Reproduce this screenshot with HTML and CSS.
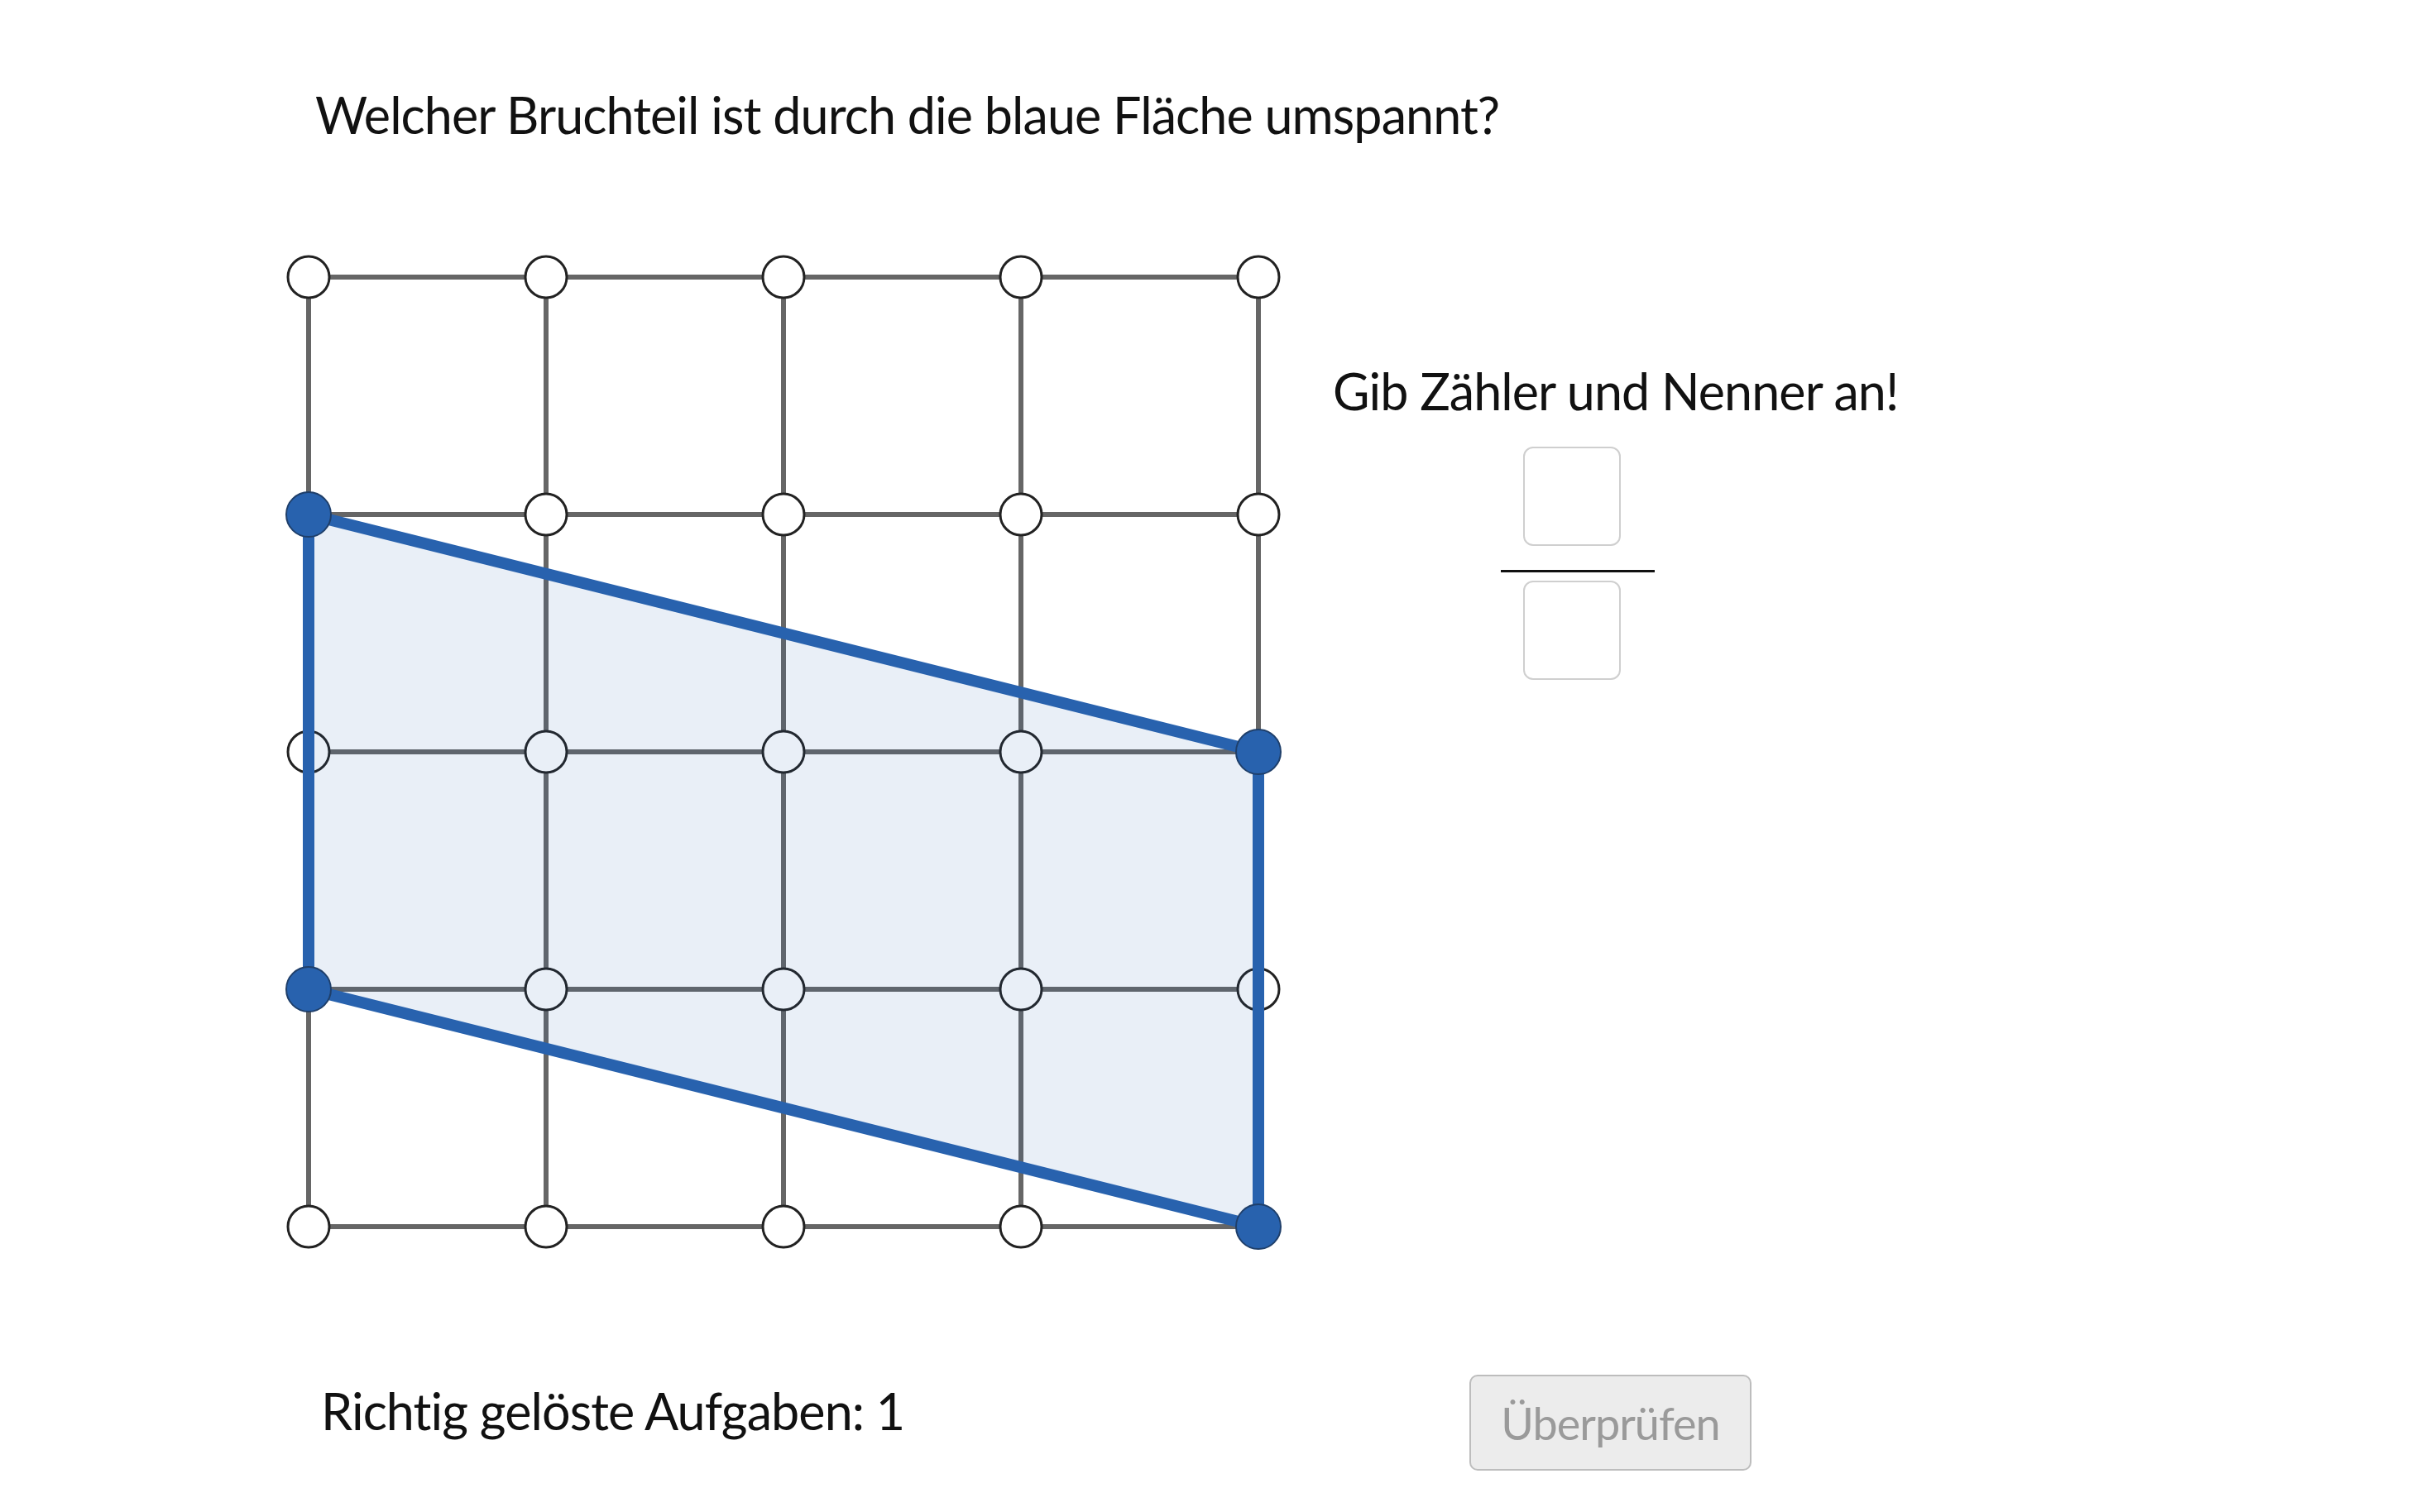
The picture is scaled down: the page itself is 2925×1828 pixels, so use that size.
FILE: index.html
```html
<!DOCTYPE html>
<html lang="de">
<head>
<meta charset="utf-8">
<title>Bruchteil</title>
<link rel="stylesheet" href="styles.css">
</head>
<body>
<div class="page">
  <p class="title">Welcher Bruchteil ist durch die blaue Fläche umspannt?</p>
  <div class="main">
    <svg class="grid" viewBox="0 0 1220 1220" width="1220" height="1220">
      <g class="lines" stroke="#666666" stroke-width="6">
        <line x1="33" y1="33" x2="1181" y2="33"/>
        <line x1="33" y1="320" x2="1181" y2="320"/>
        <line x1="33" y1="607" x2="1181" y2="607"/>
        <line x1="33" y1="894" x2="1181" y2="894"/>
        <line x1="33" y1="1181" x2="1181" y2="1181"/>
        <line x1="33" y1="33" x2="33" y2="1181"/>
        <line x1="320" y1="33" x2="320" y2="1181"/>
        <line x1="607" y1="33" x2="607" y2="1181"/>
        <line x1="894" y1="33" x2="894" y2="1181"/>
        <line x1="1181" y1="33" x2="1181" y2="1181"/>
      </g>
      <g class="nodes" fill="#ffffff" stroke="#222222" stroke-width="3">
        <circle cx="33" cy="33" r="25"/><circle cx="320" cy="33" r="25"/><circle cx="607" cy="33" r="25"/><circle cx="894" cy="33" r="25"/><circle cx="1181" cy="33" r="25"/>
        <circle cx="320" cy="320" r="25"/><circle cx="607" cy="320" r="25"/><circle cx="894" cy="320" r="25"/><circle cx="1181" cy="320" r="25"/>
        <circle cx="33" cy="607" r="25"/><circle cx="320" cy="607" r="25"/><circle cx="607" cy="607" r="25"/><circle cx="894" cy="607" r="25"/>
        <circle cx="320" cy="894" r="25"/><circle cx="607" cy="894" r="25"/><circle cx="894" cy="894" r="25"/><circle cx="1181" cy="894" r="25"/>
        <circle cx="33" cy="1181" r="25"/><circle cx="320" cy="1181" r="25"/><circle cx="607" cy="1181" r="25"/><circle cx="894" cy="1181" r="25"/>
      </g>
      <polygon points="33,320 1181,607 1181,1181 33,894" fill="#2563ad" fill-opacity="0.1" stroke="#2862ae" stroke-width="14" stroke-linejoin="round"/>
      <g class="picked" fill="#2862ae" stroke="#1f3f6a" stroke-width="2">
        <circle cx="33" cy="320" r="27"/>
        <circle cx="1181" cy="607" r="27"/>
        <circle cx="1181" cy="1181" r="27"/>
        <circle cx="33" cy="894" r="27"/>
      </g>
    </svg>
    <div class="panel">
      <p class="prompt">Gib Zähler und Nenner an!</p>
      <div class="fraction">
        <input class="box" type="text" aria-label="Zähler">
        <div class="bar"></div>
        <input class="box" type="text" aria-label="Nenner">
      </div>
    </div>
  </div>
  <div class="footer">
    <p class="score">Richtig gelöste Aufgaben: 1</p>
    <button class="check" type="button" disabled>Überprüfen</button>
  </div>
</div>
</body>
</html>
```

FILE: styles.css
```css
html, body {
  margin: 0;
  padding: 0;
  background: #ffffff;
}

body {
  font-family: "Lato", "Liberation Sans", sans-serif;
  color: #111111;
}

.page {
  width: 2925px;
  min-height: 1828px;
}

.title {
  margin: 0;
  padding: 102px 0 0 381px;
  font-size: 61px;
  letter-spacing: -0.9px;
  line-height: 74px;
}

.main {
  display: flex;
  margin-top: 126px;
}

.grid {
  display: block;
  margin-left: 340px;
  flex: none;
}

.panel {
  margin-left: 51px;
  padding-top: 134px;
}

.prompt {
  margin: 0;
  font-size: 61px;
  letter-spacing: -0.9px;
  line-height: 74px;
  white-space: nowrap;
}

.fraction {
  margin: 30px 0 0 203px;
  width: 186px;
  display: flex;
  flex-direction: column;
  align-items: center;
}

.box {
  box-sizing: border-box;
  width: 118px;
  height: 120px;
  margin: 0;
  margin-right: 14px;
  border: 2px solid #cfcfcf;
  border-radius: 12px;
  background: #ffffff;
  padding: 0;
}

.bar {
  width: 186px;
  height: 3px;
  background: #111111;
  margin: 29px 0 10px;
}

.footer {
  display: flex;
  align-items: flex-start;
  margin-top: 140px;
}

.score {
  margin: 7px 0 0 388px;
  width: 1388px;
  font-size: 61px;
  letter-spacing: -0.9px;
  line-height: 74px;
}

.check {
  box-sizing: border-box;
  width: 341px;
  height: 116px;
  margin: 0;
  padding: 0;
  border: 2px solid #bdbdbd;
  border-radius: 10px;
  background: #ececec;
  color: #9a9a9a;
  font-family: "Lato", "Liberation Sans", sans-serif;
  font-size: 54px;
  letter-spacing: -1px;
}
```
